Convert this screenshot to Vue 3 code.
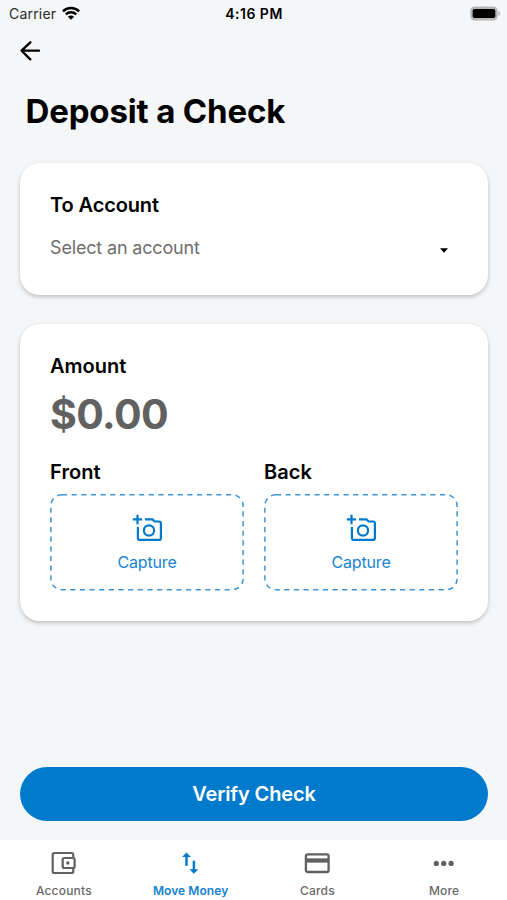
<script setup>
const sides = ['Front', 'Back']
const tabs = [
  { id: 'accounts', label: 'Accounts' },
  { id: 'move', label: 'Move Money', active: true },
  { id: 'cards', label: 'Cards' },
  { id: 'more', label: 'More' },
]
</script>

<template>
  <div class="screen">
    <header class="status">
      <div class="carrier">
        <span>Carrier</span>
        <svg width="18" height="14" viewBox="0 0 18 14" fill="none" stroke="#000" stroke-width="2.5">
          <path d="M.9 5.3a11.6 11.6 0 0 1 16.2 0" />
          <path d="M3.8 8.3a7.4 7.4 0 0 1 10.4 0" />
          <path d="M9 13.8 5.9 10.7a4.4 4.4 0 0 1 6.2 0Z" fill="#000" stroke="none" />
        </svg>
      </div>
      <span class="clock">4:16 PM</span>
      <svg class="battery" width="31" height="15" viewBox="0 0 31 15">
        <rect x="1" y="1.1" width="26" height="12.8" rx="3.8" fill="#b4b5b6" stroke="#b4b5b6" stroke-width="1.4" />
        <rect x="2.7" y="2.9" width="22.6" height="9.2" rx="1.8" fill="#000" />
        <path d="M28.4 5c1.2.4 1.8 1.4 1.8 2.5s-.6 2.1-1.8 2.5Z" fill="#b4b5b6" />
      </svg>
    </header>

    <nav class="topbar">
      <svg width="20" height="20" viewBox="0 0 20 20" fill="none" stroke="#000" stroke-width="2.3" stroke-linecap="round" stroke-linejoin="round">
        <path d="M19 9.7H1.6M10.300 1.300 1.600 9.700l8.700 8.700" />
      </svg>
    </nav>

    <h1>Deposit a Check</h1>

    <main>
      <section class="card account">
        <h2 class="to">To Account</h2>
        <div class="select">
          <span>Select an account</span>
          <svg width="8" height="5" viewBox="0 0 8 5"><path d="M0 .2h8L4.5 4.2q-.5.5-1 0Z" fill="#000" /></svg>
        </div>
      </section>

      <section class="card deposit">
        <h2>Amount</h2>
        <div class="amount">$0.00</div>
        <div class="sides">
          <div v-for="side in sides" :key="side">
            <h2>{{ side }}</h2>
            <div class="capture">
              <svg class="outline" width="194" height="97" viewBox="0 0 194 97">
                <rect x=".9" y=".7" width="192.2" height="95" rx="11" fill="none" stroke="#3c95d6" stroke-width="1.5" stroke-dasharray="5.2 4.45" />
              </svg>
              <svg class="camera" width="30" height="28" viewBox="0 0 30 28" fill="none" stroke="#007acc" stroke-width="2.2">
                <path d="M5.5 .8v9.4M.8 5.4h9.3" />
                <path d="M5.9 13v10.9q0 2 2 2h19q2 0 2-2V9.500q0-2-2-2h-4.300L20.500 5.400h-7.500" />
                <circle cx="17" cy="16.5" r="5.1" />
              </svg>
              <span>Capture</span>
            </div>
          </div>
        </div>
      </section>
    </main>

    <button class="verify">Verify Check</button>

    <footer>
      <div v-for="tab in tabs" :key="tab.id" class="tab" :class="[tab.id, { active: tab.active }]">
        <svg v-if="tab.id === 'accounts'" width="26" height="24" viewBox="0 0 26 24" fill="none" stroke="#616161" stroke-width="2.2">
          <path d="M23.3 6.5V3.8q0-1.800-1.800-1.800H4.500q-1.800 0-1.800 1.800v16.400q0 1.800 1.800 1.800h17q1.800 0 1.800-1.800V17.500" />
          <rect x="12.7" y="7" width="11.9" height="10" rx="1.5" />
          <circle cx="17.8" cy="12" r="1.7" fill="#616161" stroke="none" />
        </svg>
        <svg v-else-if="tab.id === 'move'" width="18" height="24" viewBox="0 0 18 24" fill="none" stroke="#007acc" stroke-width="2.5">
          <path d="M5.5 3.5v11.200M12.900 9.700v10.500" />
          <path d="M5.500 1.400 1 6h9ZM12.900 22.800l4.500-4.600h-9Z" fill="#007acc" stroke="none" />
        </svg>
        <svg v-else-if="tab.id === 'cards'" width="26" height="24" viewBox="0 0 26 24" fill="none" stroke="#616161" stroke-width="2.3">
          <rect x="1.9" y="3.400" width="22.7" height="17.6" rx="1.8" />
          <path d="M1.9 9.5h22.7" stroke-width="4.300" />
        </svg>
        <svg v-else width="22" height="24" viewBox="0 0 22 24" fill="#616161">
          <circle cx="3.3" cy="12.400" r="2.600" /><circle cx="10.700" cy="12.400" r="2.600" /><circle cx="18.100" cy="12.400" r="2.600" />
        </svg>
        <span>{{ tab.label }}</span>
      </div>
    </footer>
  </div>
</template>

<style>
body { background: #f4f6f8; }
</style>

<style scoped>
.screen {
  width: 507px;
  height: 900px;
  display: flex;
  flex-direction: column;
  background: #f4f6f8;
  color: #000;
  font-family: Inter, "Liberation Sans", sans-serif;
  overflow: hidden;
}
svg { display: block; flex: none; }
.status {
  height: 28px;
  padding: 0 6px 0 9px;
  display: grid;
  grid-template-columns: 1fr auto 1fr;
  align-items: center;
  font-size: 14px;
}
.carrier { display: flex; align-items: center; gap: 6px; color: #2b2b2b; letter-spacing: 0.2px; }
.carrier span { margin-top: -1px; }
.carrier svg { margin-top: -3px; }
.clock { margin: -2px 2px 0 0; font-weight: 600; letter-spacing: 0.5px; }
.battery { justify-self: end; margin-top: -2px; }
.topbar { height: 47px; padding: 13px 0 0 20px; box-sizing: border-box; }
h1 { margin: 0; padding-left: 25.5px; height: 88px; line-height: 73px; font-size: 33px; font-weight: 700; letter-spacing: -0.15px; }
main { display: flex; flex-direction: column; gap: 29px; padding: 0 19px 0 20px; }
.card {
  box-sizing: border-box;
  background: #fff;
  border-radius: 20px;
  padding: 0 30px;
  box-shadow: 0 2px 4px rgba(0, 0, 0, 0.22);
}
.account { height: 132px; padding-top: 30px; }
.deposit { height: 297px; padding-top: 30px; }
h2 { margin: 0; height: 24px; line-height: 24px; font-size: 20px; font-weight: 600; }
.to { letter-spacing: -0.12px; }
.select {
  display: flex;
  align-items: center;
  justify-content: space-between;
  height: 24px;
  margin-top: 18px;
  padding-right: 10.5px;
  color: #6e6e6e;
  font-size: 18px;
  letter-spacing: -0.17px;
}
.select svg { margin-top: 6px; }
.amount { height: 56px; margin-top: 8px; line-height: 56px; font-size: 41px; font-weight: 700; letter-spacing: -0.6px; color: #616161; }
.sides { display: flex; gap: 20px; margin-top: 18px; }
.sides h2 { letter-spacing: 0.1px; }
.capture {
  position: relative;
  box-sizing: border-box;
  width: 194px;
  height: 97px;
  margin-top: 10px;
  padding-top: 20px;
  display: flex;
  flex-direction: column;
  align-items: center;
  color: #1a85d0;
  font-size: 16px;
  letter-spacing: -0.15px;
}
.capture span { line-height: 20px; margin-top: 10px; }
.outline { position: absolute; inset: 0; }
.verify {
  margin: auto 19px 19px 20px;
  height: 54px;
  padding: 0;
  border: 0;
  border-radius: 27px;
  background: #007acc;
  color: #fff;
  font: 600 20px/54px Inter, "Liberation Sans", sans-serif;
  letter-spacing: -0.12px;
}
footer { height: 60px; display: grid; grid-template-columns: repeat(4, 1fr); background: #fff; }
.tab {
  display: flex;
  flex-direction: column;
  align-items: center;
  padding-top: 11px;
  font-size: 12px;
  font-weight: 500;
  letter-spacing: 0.2px;
  color: #696969;
}
.tab span { line-height: 16px; margin-top: 8px; padding-left: 1px; white-space: nowrap; }
.tab.active { color: #1482d0; font-weight: 600; letter-spacing: 0.05px; }
</style>
